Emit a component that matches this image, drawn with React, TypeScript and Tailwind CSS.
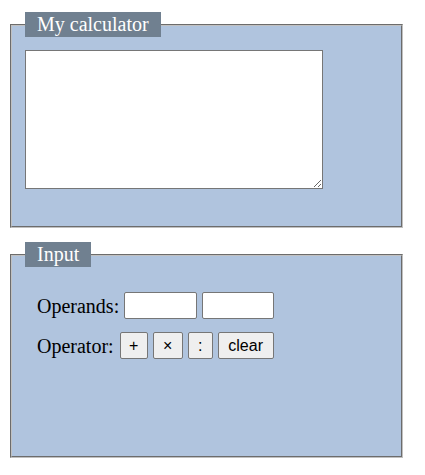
import React from "react";

export default function App() {
  return (
    <div className="font-['Liberation_Serif',serif] text-[20px] text-black bg-white min-h-[475px] pt-[12px]">
      <fieldset className="ml-[10px] w-[393px] border-2 [border-style:groove] border-[#c0c0c0] bg-[#b0c4de] pl-[13px] pt-[13px] pb-[37px]">
        <legend className="bg-[#708090] text-white px-[12px] h-[25px] leading-[25px]">My calculator</legend>
        <textarea className="block w-[298px] h-[139px] bg-white border border-[#767676] resize"></textarea>
      </fieldset>
      <fieldset className="mt-[14px] ml-[10px] w-[393px] border-2 [border-style:groove] border-[#c0c0c0] bg-[#b0c4de] pl-[13px] pt-[25px] pb-[97px]">
        <legend className="bg-[#708090] text-white px-[12px] h-[25px] leading-[25px]">Input</legend>
        <div className="flex flex-col gap-[13px] pl-[12px]">
          <div className="flex items-center gap-[5px] h-[27px]">
            <span>Operands:</span>
            <input type="text" className="w-[73px] h-[27px] bg-white border border-[#767676] rounded-[2px]" />
            <input type="text" className="w-[72px] h-[27px] bg-white border border-[#767676] rounded-[2px]" />
          </div>
          <div className="flex items-center gap-[5px] h-[27px]">
            <span className="mr-[1px]">Operator:</span>
            {[
              ["+", "w-[28px]"],
              ["×", "w-[30px]"],
              [":", "w-[25px]"],
              ["clear", "w-[56px]"],
            ].map(([t, w]) => (
              <button
                key={t}
                className={`${w} h-[27px] bg-[#efefef] border border-[#767676] rounded-[2px] font-['Liberation_Sans',sans-serif] text-[16px] leading-none flex items-center justify-center`}
              >
                {t}
              </button>
            ))}
          </div>
        </div>
      </fieldset>
    </div>
  );
}
